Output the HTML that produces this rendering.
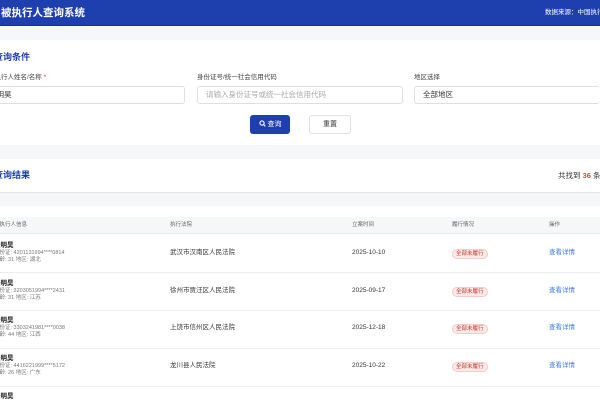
<!DOCTYPE html>
<html><head><meta charset="utf-8"><style>
*{margin:0;padding:0;box-sizing:border-box}
html,body{width:600px;height:400px;overflow:hidden}
body{background:#fff;font-family:"Liberation Sans","Noto Sans CJK SC",sans-serif;color:#333}
#w{position:relative;width:600px;height:400px;overflow:hidden}
.a{position:absolute;white-space:nowrap;line-height:1}
.hdr{left:0;top:0;width:600px;height:26px;background:#1e3fae;border-bottom:1px solid #162f8a}
.gray{background:#f6f7f9;left:0;width:600px}
.inp{position:absolute;height:18px;border:1px solid #dcdfe6;border-radius:3px;background:#fff;font-size:7.5px;line-height:16px;padding-left:8px;white-space:nowrap;overflow:hidden}
.lbl{font-size:6.5px;color:#444}
.row{position:absolute;left:0;width:600px;height:38px;border-bottom:1px solid #ebeef3}
.nm{font-size:6.5px;font-weight:bold;color:#222}
.sm{font-size:5.5px;color:#777}
.tag{position:absolute;font-size:5.5px;color:#c0392b;background:#fde8e8;border:1px solid #f6caca;border-radius:6px;padding:0 3px;height:10px;line-height:8px;white-space:nowrap}
.lk{font-size:6.5px;color:#3b7de0}
</style></head><body><div id="w">
<div class="a hdr"></div>
<div class="a" style="left:1px;top:8px;color:#fff;font-size:10.5px;font-weight:bold">被执行人查询系统</div>
<div class="a" style="left:545px;top:10px;color:#fff;font-size:6.5px">数据来源：中国执行信息公开网</div>
<div class="a gray" style="top:27px;height:13px"></div>
<div class="a" style="left:-6px;top:53px;font-size:9px;font-weight:bold;color:#1e3fae">查询条件</div>
<div class="a lbl" style="left:-12px;top:75px">被执行人姓名/名称 <span style="color:#e33">*</span></div>
<div class="a lbl" style="left:197px;top:75px">身份证号/统一社会信用代码</div>
<div class="a lbl" style="left:414px;top:75px">地区选择</div>
<div class="inp" style="left:-20px;top:86px;width:205px;color:#333">张明昊</div>
<div class="inp" style="left:197px;top:86px;width:206px;color:#aaa">请输入身份证号或统一社会信用代码</div>
<div class="inp" style="left:414px;top:86px;width:186px;color:#333;border-right:none">全部地区</div>
<div class="a" style="left:250px;top:115px;width:40px;height:19px;background:#1e3fae;border-radius:3px;color:#fff;font-size:7px;line-height:19px;text-align:center"><svg width="7" height="7" viewBox="0 0 10 10" style="vertical-align:-1px"><circle cx="4.3" cy="4.3" r="3" fill="none" stroke="#fff" stroke-width="1.6"/><path d="M6.5 6.5L9 9" stroke="#fff" stroke-width="1.6"/></svg> 查询</div>
<div class="a" style="left:309px;top:115px;width:42px;height:19px;background:#fff;border:1px solid #dcdfe6;border-radius:3px;color:#333;font-size:7px;line-height:17px;text-align:center">重置</div>
<div class="a gray" style="top:145px;height:14px"></div>
<div class="a" style="left:-6px;top:171px;font-size:9px;font-weight:bold;color:#1e3fae">查询结果</div>
<div class="a" style="left:558px;top:172px;font-size:7.5px;color:#333">共找到 <b style="color:#e53935">36</b> 条</div>
<div class="a" style="left:0;top:192px;width:600px;height:1px;background:#e3e5ea"></div>
<div class="a gray" style="top:193px;height:13px"></div>
<div class="a" style="left:0;top:217px;width:600px;height:17px;background:#f6f7f9;border-bottom:1px solid #e6e8ee"></div>
<div class="a lbl" style="left:-6px;top:223px;color:#666;font-size:5.5px">被执行人信息</div>
<div class="a lbl" style="left:170px;top:223px;color:#666;font-size:5.5px">执行法院</div>
<div class="a lbl" style="left:352px;top:223px;color:#666;font-size:5.5px">立案时间</div>
<div class="a lbl" style="left:452px;top:223px;color:#666;font-size:5.5px">履行情况</div>
<div class="a lbl" style="left:549px;top:223px;color:#666;font-size:5.5px">操作</div>

<div class="row" style="top:235px"></div>
<div class="row" style="top:273px"></div>
<div class="row" style="top:311px"></div>
<div class="row" style="top:349px"></div>

<div class="a nm" style="left:-6px;top:243px">张明昊</div>
<div class="a sm" style="left:-6px;top:251px">身份证: 4201131994****0814</div>
<div class="a sm" style="left:-6px;top:258px">年龄: 31 地区: 湖北</div>
<div class="a" style="left:170px;top:250px;font-size:6.5px">武汉市汉南区人民法院</div>
<div class="a" style="left:352px;top:250px;font-size:6.5px">2025-10-10</div>
<div class="tag" style="left:452px;top:249px">全部未履行</div>
<div class="a lk" style="left:549px;top:250px">查看详情</div>

<div class="a nm" style="left:-6px;top:281px">张明昊</div>
<div class="a sm" style="left:-6px;top:289px">身份证: 3203051994****2431</div>
<div class="a sm" style="left:-6px;top:296px">年龄: 31 地区: 江苏</div>
<div class="a" style="left:170px;top:288px;font-size:6.5px">徐州市贾汪区人民法院</div>
<div class="a" style="left:352px;top:288px;font-size:6.5px">2025-09-17</div>
<div class="tag" style="left:452px;top:287px">全部未履行</div>
<div class="a lk" style="left:549px;top:288px">查看详情</div>

<div class="a nm" style="left:-6px;top:318px">张明昊</div>
<div class="a sm" style="left:-6px;top:326px">身份证: 3303241981****0038</div>
<div class="a sm" style="left:-6px;top:333px">年龄: 44 地区: 江西</div>
<div class="a" style="left:170px;top:325px;font-size:6.5px">上饶市信州区人民法院</div>
<div class="a" style="left:352px;top:325px;font-size:6.5px">2025-12-18</div>
<div class="tag" style="left:452px;top:324px">全部未履行</div>
<div class="a lk" style="left:549px;top:325px">查看详情</div>

<div class="a nm" style="left:-6px;top:356px">张明昊</div>
<div class="a sm" style="left:-6px;top:364px">身份证: 4416221999****5172</div>
<div class="a sm" style="left:-6px;top:371px">年龄: 26 地区: 广东</div>
<div class="a" style="left:170px;top:363px;font-size:6.5px">龙川县人民法院</div>
<div class="a" style="left:352px;top:363px;font-size:6.5px">2025-10-22</div>
<div class="tag" style="left:452px;top:362px">全部未履行</div>
<div class="a lk" style="left:549px;top:363px">查看详情</div>

<div class="a nm" style="left:-6px;top:394px">张明昊</div>
</div></body></html>
